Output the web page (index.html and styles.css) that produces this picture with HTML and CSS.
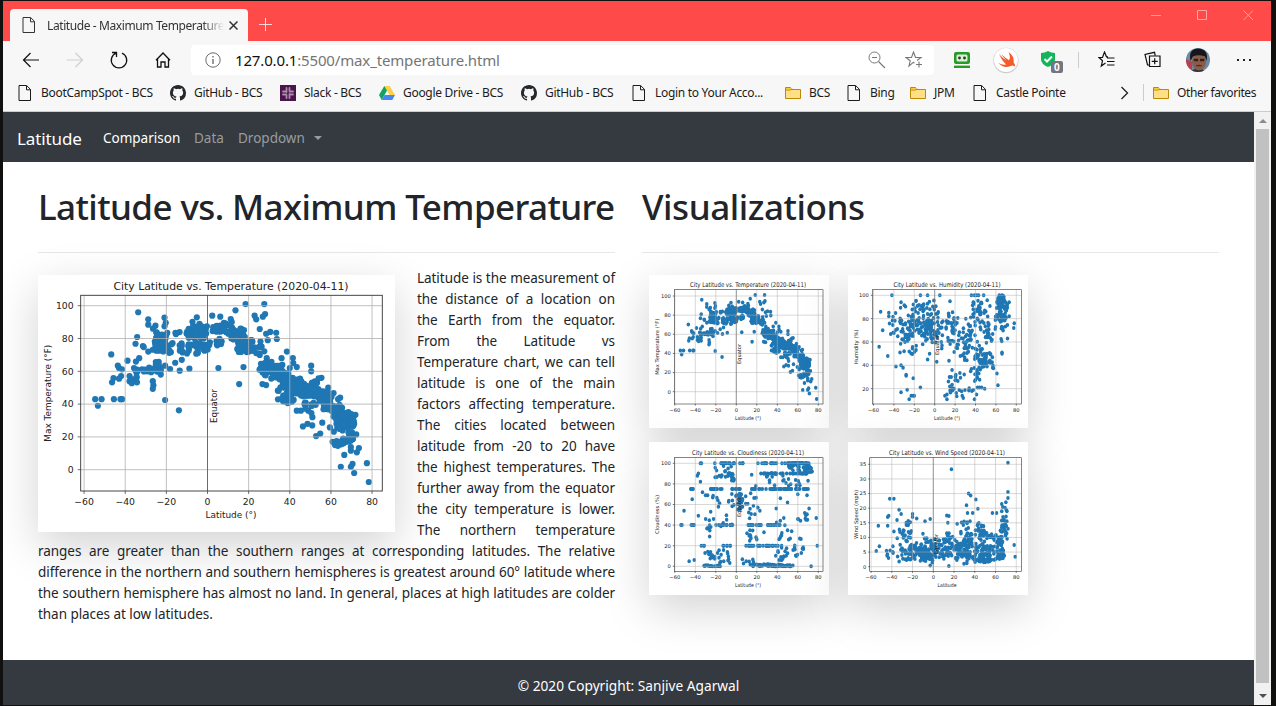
FILE: index.html
```
<!DOCTYPE html>
<html lang="en">
<head>
<meta charset="utf-8">
<title>Latitude - Maximum Temperature</title>
<link rel="stylesheet" href="styles.css">
</head>
<body>
<svg class="defs" width="0" height="0">
  <symbol id="page" viewBox="0 0 16 16"><path d="M2 .5h7.6l3.9 3.9v11.1H2zM9.5.8v4h4" fill="none" stroke="currentColor"/></symbol>
  <symbol id="folder" viewBox="0 0 16 16"><path d="M.5 2.5h5l1 2h9v9H.5z" fill="#ffde85" stroke="#b98a08"/><path d="M1 5h5l1-1.2" fill="none" stroke="#b98a08"/><path d="M1 3h4.4l.6 1H1z" fill="#ffc93c"/></symbol>
  <symbol id="github" viewBox="0 0 16 16"><path fill="#24292e" fill-rule="evenodd" d="M8 0C3.58 0 0 3.58 0 8c0 3.54 2.29 6.53 5.47 7.59.4.07.55-.17.55-.38 0-.19-.01-.82-.01-1.49-2.01.37-2.53-.49-2.69-.94-.09-.23-.48-.94-.82-1.13-.28-.15-.68-.52-.01-.53.63-.01 1.08.58 1.23.82.72 1.21 1.87.87 2.33.66.07-.52.28-.87.51-1.07-1.78-.2-3.64-.89-3.64-3.95 0-.87.31-1.59.82-2.15-.08-.2-.36-1.02.08-2.12 0 0 .67-.21 2.2.82a7.6 7.6 0 0 1 4 0c1.53-1.04 2.2-.82 2.2-.82.44 1.1.16 1.92.08 2.12.51.56.82 1.27.82 2.15 0 3.07-1.87 3.75-3.65 3.95.29.25.54.73.54 1.48 0 1.07-.01 1.93-.01 2.2 0 .21.15.46.55.38A8.01 8.01 0 0 0 16 8c0-4.42-3.58-8-8-8z"/></symbol>
</svg>
<div class="window">
  <header class="tabstrip">
    <div class="tab">
      <svg class="i16" ><use href="#page"/></svg>
      <span class="tab-title">Latitude - Maximum Temperature</span>
      <svg class="tab-close" width="9" height="9" viewBox="0 0 9 9"><path d="M.5.5l8 8M8.5.5l-8 8" stroke="#333" stroke-width="1.5"/></svg>
    </div>
    <svg class="newtab" width="13" height="13" viewBox="0 0 13 13"><path d="M6.5 0v13M0 6.5h13" stroke="#ffd5d5"/></svg>
    <div class="controls">
      <svg width="11" height="11" viewBox="0 0 11 11"><path d="M0 5.5h10" stroke="#ff9b9b"/></svg>
      <svg width="11" height="11" viewBox="0 0 11 11"><path d="M.5.5h9v9h-9z" fill="none" stroke="#ffa6a6"/></svg>
      <svg width="11" height="11" viewBox="0 0 11 11"><path d="M.5.5l9.500 9.500M10 .5L.5 10" stroke="#ff9b9b"/></svg>
    </div>
  </header>

  <div class="toolbar">
    <svg class="nav" viewBox="0 0 20 20"><path d="M18 10H2.500M9.500 3L2.500 10l7 7" fill="none" stroke="#111" stroke-width="1.200"/></svg>
    <svg class="nav" viewBox="0 0 20 20"><path d="M2 10h15.500M10.500 3l7 7-7 7" fill="none" stroke="#cfcfcf" stroke-width="1.200"/></svg>
    <svg class="nav" viewBox="0 0 20 20"><path d="M7 3.100a7.700 7.700 0 1 0 6 0M3 2.500h4.500V7" fill="none" stroke="#111" stroke-width="1.300"/></svg>
    <svg class="nav home" viewBox="0 0 20 20"><path d="M4.500 9v8H8v-5h4v5h3.500V9M3 10.300L10 3l7 7.300" fill="none" stroke="#111" stroke-width="1.300"/></svg>
    <div class="omnibox">
      <svg width="16" height="16" viewBox="0 0 16 16"><circle cx="8" cy="8" r="7.200" fill="none" stroke="#6b6b6b"/><path d="M8 7v5M8 4v1.500" stroke="#555" stroke-width="1.200"/></svg>
      <span class="url"><b>127.0.0.1</b>:5500/max_temperature.html</span>
      <svg class="zoomicon" width="18" height="18" viewBox="0 0 18 18"><circle cx="6.500" cy="6.500" r="5.500" fill="none" stroke="#777"/><path d="M4 6.500h5M10.500 10.500l6.500 6.500" stroke="#777" stroke-width="1.200"/></svg>
      <svg width="18" height="18" viewBox="0 0 18 18"><path d="M9.500 12l-1.200-.6L4 15l1.200-5.300L1 6.500h5.500L8.500 1l2 5.500H16l-4 3M11 13.500h6M14 10.500v6" fill="none" stroke="#777" stroke-width="1.100"/></svg>
    </div>
    <svg class="ext e1" width="16" height="16" viewBox="0 0 16 16"><rect x="0" y="0" width="16" height="12" rx="2" fill="#279b27"/><rect x="2.500" y="2.500" width="11" height="7" rx="1.500" fill="#d9f1d5"/><circle cx="5.500" cy="6" r="1.400" fill="#333"/><circle cx="10.500" cy="6" r="1.400" fill="#333"/><path d="M0 14.800h16" stroke="#279b27" stroke-width="2.400"/></svg>
    <svg class="ext" width="28" height="28" viewBox="0 0 28 28"><circle cx="14" cy="14.500" r="12.700" fill="#ccc"/><circle cx="14" cy="14" r="12" fill="#fff"/><path d="M7 8q4 4.500 7.500 6.500Q11 11 9 8q5 4.500 8 6.300Q19 11 16.500 6q6 4 5.200 10.500 1.700 2 1 4.200-2-2-4-.8Q12 23 6.500 17q4 2.500 7.500 1.500Q9.500 14 7 8z" fill="#f45a2a"/></svg>
    <svg class="ext e3" width="24" height="24" viewBox="0 0 24 24"><path d="M1 3q4 0 7-2 3 2 7 2v7q-1 5-7 7-6-2-7-7z" fill="#14b45b"/><path d="M4.500 9l2.500 2.500 5-5" fill="none" stroke="#fff" stroke-width="2"/><rect x="11" y="11" width="12" height="12" rx="2" fill="#75757f"/><text x="14" y="21" font-family="Noto Sans" font-size="10" font-weight="700" fill="#fff">0</text></svg>
    <i class="sep"></i>
    <svg class="ext" width="18" height="18" viewBox="0 0 18 18"><path d="M10 5.800H8.500L6.500 1l-2 5.500H1l3.500 3.300L3.300 15 7.500 12M9 7h7.500M9 10.500h7.500M9 14h7.500" fill="none" stroke="#111" stroke-width="1.200"/></svg>
    <svg class="ext" width="18" height="18" viewBox="0 0 18 18"><path d="M5 14H3.500L1 3.500 10.500 1.300l.7 3M5.500 5H16v10.500H5.500zM10.700 7.300v6M7.700 10.300h6" fill="none" stroke="#111" stroke-width="1.200"/></svg>
    <svg class="ext" width="24" height="24" viewBox="0 0 24 24"><defs><clipPath id="round"><circle cx="12" cy="12" r="12"/></clipPath></defs><g clip-path="url(#round)"><path d="M0 0h24v24H0z" fill="#6a8aa5"/><path d="M0 11l6 3v10H0z" fill="#b8404c"/><path d="M3 24q9-7 18 0z" fill="#34323a"/><ellipse cx="13" cy="14" rx="7" ry="8.500" fill="#8a5c49"/><path d="M4.500 13Q2 1 12 .500q11 .5 8.500 12.500L19 8.500Q12 6 7 8.500z" fill="#18161a"/><path d="M7.500 10.800h4.700v2.400H8zM14 10.800h4.700l-.7 2.400h-4z" fill="#30211e"/><path d="M10 17.300q3-1.300 6 0v1h-6z" fill="#4a2d25"/></g></svg>
    <svg class="ext" width="16" height="4" viewBox="0 0 16 4"><path d="M1 1h2v2H1zM7 1h2v2H7zM13 1h2v2h-2z" fill="#222"/></svg>
  </div>

  <nav class="bookmarks">
    <span><svg class="i16"><use href="#page"/></svg>BootCampSpot - BCS</span>
    <span><svg class="i16"><use href="#github"/></svg>GitHub - BCS</span>
    <span><svg class="i16" viewBox="0 0 16 16"><path d="M0 0h16v16H0z" fill="#4a154b"/><path d="M6.500 3v4M9.500 3v2.500M6.500 10.500v2.500M9.500 9v4M3 6.500h2.500M9.500 6.500H13M3 9.500h3.500M10.500 9.500H13" stroke="#a98cab" stroke-width="1.800" stroke-linecap="round"/></svg>Slack - BCS</span>
    <span><svg class="i16" viewBox="0 0 16 16"><path d="M5.300 1h5.400L16 10h-5.300z" fill="#ffcf48"/><path d="M5.300 1L8 5.500 2.700 15 0 10z" fill="#11a35f"/><path d="M5.500 10H16l-2.700 5H2.700z" fill="#4688f1"/></svg>Google Drive - BCS</span>
    <span><svg class="i16"><use href="#github"/></svg>GitHub - BCS</span>
    <span><svg class="i16"><use href="#page"/></svg>Login to Your Acco...</span>
    <span><svg class="i16"><use href="#folder"/></svg>BCS</span>
    <span><svg class="i16"><use href="#page"/></svg>Bing</span>
    <span><svg class="i16"><use href="#folder"/></svg>JPM</span>
    <span><svg class="i16"><use href="#page"/></svg>Castle Pointe</span>
    <span><svg width="9" height="14" viewBox="0 0 9 14"><path d="M1.500 1l6 6-6 6" fill="none" stroke="#222" stroke-width="1.300"/></svg></span>
    <span class="other"><svg class="i16"><use href="#folder"/></svg>Other favorites</span>
  </nav>

  <div class="view">
    <div class="doc">
      <nav class="navbar">
        <span class="brand">Latitude</span>
        <span class="link active">Comparison</span>
        <span class="link l2">Data</span>
        <span class="link l3">Dropdown</span>
        <i class="caret"></i>
      </nav>
      <main class="cols">
        <section>
          <h1 class="t1">Latitude vs. Maximum Temperature</h1>
          <hr>
          <svg class="chart main-chart" data-chart="main" viewBox="0 0 357 257"></svg>
          <p class="copy">
            <span>Latitude is the measurement of</span>
            <span>the distance of a location on</span>
            <span>the Earth from the equator.</span>
            <span>From the Latitude vs</span>
            <span>Temperature chart, we can tell</span>
            <span>latitude is one of the main</span>
            <span>factors affecting temperature.</span>
            <span>The cities located between</span>
            <span>latitude from -20 to 20 have</span>
            <span>the highest temperatures. The</span>
            <span>further away from the equator</span>
            <span>the city temperature is lower.</span>
            <span>The northern temperature</span>
            <span>ranges are greater than the southern ranges at corresponding latitudes. The relative</span>
            <span>difference in the northern and southern hemispheres is greatest around 60° latitude where</span>
            <span>the southern hemisphere has almost no land. In general, places at high latitudes are colder</span>
            <span class="last">than places at low latitudes.</span>
          </p>
        </section>
        <section>
          <h1 class="t2">Visualizations</h1>
          <hr>
          <div class="thumbs">
            <svg class="chart" data-chart="temp" viewBox="0 0 180 153"></svg>
            <svg class="chart" data-chart="humidity" viewBox="0 0 180 153"></svg>
            <svg class="chart" data-chart="cloud" viewBox="0 0 180 153"></svg>
            <svg class="chart" data-chart="wind" viewBox="0 0 180 153"></svg>
          </div>
        </section>
      </main>
      <footer class="footer"><span>© 2020 Copyright: Sanjive Agarwal</span></footer>
    </div>
    <div class="scroll">
      <i class="up"></i><div class="thumb"></div><i class="down"></i>
    </div>
  </div>
</div>
<script src="charts.js"></script>
</body>
</html>
```
FILE: styles.css
```
* { box-sizing: border-box; }
body { margin: 0; height: 706px; overflow: hidden; background: #10100f; padding: 1px 5px 1px 3px; font-family: "Noto Sans", "Open Sans", sans-serif; }
.defs { position: absolute; }
svg { display: block; flex: none; }
.i16 { width: 16px; height: 16px; }
.window { height: 704px; width: 1268px; background: #f7f7f7; display: flex; flex-direction: column; }

.tabstrip { height: 40px; background: #ff4a4a; display: flex; align-items: flex-start; padding-left: 7px; flex: none; }
.tab { width: 238px; height: 32px; margin-top: 8px; background: #f7f7f7; border-radius: 4px 4px 0 0; display: flex; align-items: center; padding: 0 10px 0 11px; color: #333; }
.tab-title { width: 177px; margin-left: 10px; margin-right: 5px; font-size: 12px; letter-spacing: -0.4px; white-space: nowrap; -webkit-mask-image: linear-gradient(90deg, #000 88%, transparent); mask-image: linear-gradient(90deg, #000 88%, transparent); }
.newtab { margin: 17px 0 0 11px; }
.controls { margin-left: auto; margin-right: 17px; margin-top: 9px; display: flex; gap: 35px; }

.toolbar { height: 38px; flex: none; display: grid; grid-template-columns: 44px 44px 44px 50px 743px 50px 44px 44px 12px 46px 45px 45px 47px; padding-left: 6px; align-items: center; justify-items: center; }
.nav { width: 20px; height: 20px; }
.home { margin-right: 6px; }
.omnibox { width: 743px; height: 30px; background: #fff; border-radius: 4px; display: flex; align-items: center; padding: 0 11px 0 14px; justify-self: start; }
.url { margin-left: 14px; font-size: 15px; letter-spacing: -0.15px; color: #757575; white-space: nowrap; }
.url b { font-weight: 400; color: #111; }
.zoomicon { margin-left: auto; margin-right: 19px; }
.e1 { margin-left: 6px; }
.e3 { margin: 4px 0 0 4px; }
.sep { width: 1px; height: 16px; background: #ccc; }

.bookmarks { height: 33px; flex: none; border-bottom: 1px solid #cbcbcb; display: grid; grid-template-columns: 153px 110px 99px 142px 110px 154px 61px 64px 62px 148px 24px 110px; padding-left: 14px; padding-bottom: 5px; align-items: center; color: #1b1b1b; font-size: 12px; letter-spacing: -0.3px; white-space: nowrap; }
.bookmarks span { display: flex; align-items: center; gap: 8px; }
.bookmarks .other { border-left: 1px solid #ccc; padding-left: 9px; margin-left: -1px; letter-spacing: -0.4px; }

.view { height: 593px; flex: none; display: flex; }
.doc { width: 1251px; background: #fff; display: flex; flex-direction: column; color: #212529; }
.navbar { height: 50px; flex: none; background: #343a40; display: flex; align-items: center; padding: 2px 0 0 14px; color: #999c9f; font-size: 13.5px; white-space: nowrap; }
.brand { color: #fff; font-size: 17px; width: 86px; letter-spacing: -0.1px; }
.link { width: 91px; }
.active { color: #fff; }
.l2 { width: 44px; }
.l3 { width: 76px; }
.caret { border: 4px solid transparent; border-top-color: #999c9f; border-bottom: 0; }
.cols { height: 498px; flex: none; display: grid; grid-template-columns: 577px 577px; column-gap: 27px; padding: 23px 0 0 35px; }
h1 { margin: 0; height: 43px; line-height: 43px; font-size: 35px; font-weight: 500; white-space: nowrap; }
.t1 { letter-spacing: -0.6px; }
.t2 { letter-spacing: -0.45px; }
hr { margin: 24px 0 0; border: 0; border-top: 1px solid #e7e7e7; height: 1px; }
.chart { background: #fff; box-shadow: 0 14px 43px rgba(0, 0, 0, .175); }
.main-chart { float: left; width: 357px; height: 257px; margin: 22px 22px 0 0; }
.copy { margin: 15px 0 0; font-size: 13.5px; letter-spacing: -0.05px; line-height: 21px; }
.copy span { display: block; white-space: nowrap; text-align: justify; text-align-last: justify; }
.copy .last { text-align-last: left; }
.thumbs { display: grid; grid-template-columns: 180px 180px; gap: 14px 19px; padding: 22px 0 0 7px; }
.thumbs .chart { width: 180px; height: 153px; }
.footer { height: 45px; background: #343a40; color: #fff; text-align: center; font-size: 13.7px; line-height: 52px; overflow: hidden; }

.scroll { width: 17px; background: #f1f1f1; display: flex; flex-direction: column; align-items: center; height: 593px; }
.scroll i { border: 4px solid transparent; }
.scroll .up { border-bottom-color: #8a8a8a; border-top: 0; margin: 7px 0 6px; }
.scroll .thumb { width: 13px; height: 554px; background: #c1c1c1; }
.scroll .down { border-top-color: #505050; border-bottom: 0; margin-top: 11px; }
```
FILE: charts.js
```
const NS = 'http://www.w3.org/2000/svg';

function randomizer(seed) {
  return () => {
    seed = (seed * 1664525 + 1013904223) >>> 0;
    return seed / 4294967296;
  };
}

// Cities are listed singly, then as groups: [lat from, lat to, value from, value to, count].
// spread widens each group's latitudes and share scales its count.
function build(seed, singles, groups, spread, share, lift, top) {
  const r = randomizer(seed);
  const pts = [];
  for (let i = 0; i < singles.length; i += 2) pts.push([singles[i], singles[i + 1]]);
  for (const [a, b, c, d, n] of groups)
    for (let i = 0; i < n * share; i++) {
      const lat = a + (b - a) * r() + (r() - .5) * spread;
      const v = c + (d - c) * r() + (d - c > 2 ? (r() - .5) * lift : 0);
      pts.push([Math.min(lat, 74), Math.min(v, top)]);
    }
  return pts;
}

const temp = build(7, [
  -54.6,43,-51.5,43,-53.3,39,-45.5,43,-42.3,43,-41.5,43,-46.8,70.3,-33.7,96,-28.8,91.7,-28.8,88.4,-25.3,87.8,-26.5,86,
  -34.2,80.9,-35,76.8,-31.4,75.4,-31,74.8,-28.8,72,-38.9,66.5,-43.6,63.4,-43,62,-41.6,61.2,-42,57.1,-43,55.5,-45.7,55.9,-46.4,53.3,
  -37.9,57.1,-37.9,54,-33.2,68,-34.8,65.9,-26.6,54,-26.3,51.5,-26.6,49.3,-20.9,92.7,-20.3,89.6,-20.9,87.4,-20.6,42.5,
  -13.9,36.2,-13.5,60.4,-8.8,61.6,-12.5,67,-18.2,61.4,-20.6,63.4,-15.7,65.2,-5.2,92.9,2.3,93.9,6.2,93.3,13.6,97.2,18.5,101,27.6,101,
  22.9,93.9,23.7,91.7,28,94.9,26.9,93.3,25.4,85.8,11.3,91.9,11.8,90,8,89.6,-7.3,90.2,-3.9,89,17.5,62.6,5.3,62,15.4,52.2,
  30.5,84,28.5,82.9,33.4,83.5,33.7,79.7,29.3,79,38.6,72,41.5,68.1,41.7,65,36,68,28.8,68,50.4,63.4,50.4,60,43.4,62.6,40,62,
  55.4,56,54,55.7,58.7,50,61.3,46.7,64.5,43.9,63.5,43,26.7,52.2,28.5,51.6,25.3,61,46.4,26.4,48.6,28,50.9,27,43.4,36,45.4,36,
  52.8,20.5,54.8,22,55.8,28.7,59.5,25.8,61.4,23.2,60.8,17,64.8,1.8,69.7,1.8,70.5,3.5,71.3,-2,77.5,4,78.4,-7.5,66.5,9,72.6,10.6,
  73.6,13.2,72.3,21.5,69.7,11.6,69.7,13.8,62,15,49,36,50.5,34.5,51,32
], [
  [-26,-19,71,84,40],[-20,-8,71,77,22],[-18,-8,82,85,9],[-9,0,79,88,42],[-9,1,71,78,20],[2,8,84,88,14],[4,7,76,80,8],
  [8,13,83,89,15],[11,18,79,86,34],[14,23,72,80,55],[24,28,70,78,9],[-36,-27,59,62.5,14],[-37,-32,53,57,7],[-27,-22,57,66,11],
  [26,31,58,66,19],[31,36,55,64,25],[34,42,41,49,27],[36,40,50,60,22],[40,45,46,56,30],[45,50,44,54,22],[49,54,44,55,24],
  [46,52,37,42,9],[54,60,40,48,22],[55,61,34,41,11],[61,66,32,40,23],[62,67,24,31,20],[66,72,26,35,36],[66,71,17,24,12],[62,67,14,19,10]
], 1.6, 1, 1.5, 101);

const humidity = build(21, [
  -53,86,-51,70,-54.5,56,-46,48,-42,100,-14,100,-7,100,5,100,36,100,39,100,41,100,43,100,48,100,-38,39,-33,40,-31,38,-28,32,-28,31,
  -21,29,-14,21,-27,19,-33,17,-25,11,-23,14,-21,14,-20,14,-7,45,-5,50,2,43,62,23,49,20,61,33,78,76,77.500,72,66,50,66,51,-34,51,-30,52,
  12,11,12,15,10,14,39,11,41,15,46,21,44,21,42,21,19,20,14,44,17,36,15,95,-45,85,-45,82,-33,94,73,94,73,82,28,12,27,14
], [
  [-44,-34,62,88,16],[-34,-22,60,92,40],[-24,-13,67,78,32],[-12,-2,71,78,42],[-22,0,80,95,38],[-14,4,60,70,22],[-25,-20,50,58,9],[0,8,55,90,26],
  [10,22,68,84,32],[10,24,54,68,14],[14,30,16,34,26],[25,40,56,70,26],[34,52,84,94,34],[30,50,72,84,20],[42,56,38,49,46],
  [34,45,26,38,16],[46,60,58,76,28],[62,70,78,97,75],[63,68,95,100,18],[64,71,60,76,10],[26,50,42,58,28],[35,40,13,22,4]
], 5, .87, 6, 100);

const cloud = build(44, [
  -51,54,-54,40,-53,40,-43,65,-37,49,-46,5,-41,6,-35,82,-35,100,-34,100,-21,100,-38,88,-37,90,-33,72,-30,69,-28,69,78,47,79,20,71,56,73,0,
  60,46,50,62,43,66,39,56,60,70,69,69,70,83,74,92,73,95,14,71,19,78,23,54,21,57,15,89,-8,95,-5,97,-25,53,-28,37,-26,29,27,33,50,35,54,34
], [
  [-45,-40,75,75,4],[-25,-8,75,75,14],[-8,4,75,75,8],[14,28,75,75,10],[31,55,75,75,28],[57,69,75,75,12],[50,71,100,100,40],
  [-15,8,100,100,18],[12,47,100,100,15],[25,47,90,90,17],[49,69,90,90,17],[60,72,90,98,26],[47,60,94,98,10],[-37,-14,0,1,19],
  [15,43,0,2,40],[32,55,0,1,45],[10,45,20,20,28],[-34,-4,20,20,10],[11,25,40,40,16],[30,41,40,40,10],[-19,-3,40,40,11],[-47,-36,40,40,4],
  [-8,-2,82,90,15],[-25,-2,86,99,14],[-24,5,56,73,20],[2,7,56,70,18],[8,20,46,70,12],[-33,-4,4,17,27],[-30,-5,30,49,15],
  [5,18,2,9,9],[10,25,24,36,11],[38,52,6,18,15],[37,52,25,47,12],[52,67,5,29,15],[62,70,44,53,8],[30,49,78,94,12],[48,62,78,88,9]
], 3, .9, 3, 100);

const wind = build(98, [
  17.5,33.3,72,35.5,72,25.5,72,23.5,34,25,36,24.3,41,23,-42,23.200,-38,23.200,-33,19.500,-31,18,-53,14,-44,14,-44,17,-43,17.400,-35,16,
  -20,18,-20,17,-16,16.500,-3,16.300,-8,15.500,-10,11.300,13,17.500,15,17.300,33,18.400,38,18.400,43,19.800,32,21,57,18.400,61,18.400,
  66,21.400,66,19,67,20.400,70,22,71,19,-55,5.400,-52,7,-38,12,-39,7,78,7.400,79,3.400,15,.2,-3,.4,14,15,23,14.700
], [
  [-46,-38,3,6,8],[-34,-20,8,12.500,24],[-27,-21,13,16,8],[-34,-22,2,6,22],[-24,-11,2,8,42],[-14,1,2,7,72],
  [-11,7,6,10,22],[5,18,3,9,42],[10,18,8,12,14],[19,33,4,9,42],[28,40,7,12,32],[29,37,13,16,9],[39,54,9,13,30],
  [30,48,2,8,55],[46,57,2,7,48],[43,50,13,15,9],[56,67,6,11,28],[60,69,2,6,28],[65,71,8,16,28],[65,71,16,20,6],[20,52,1,4,25]
], 4, .86, 1.4, 40);

const charts = {
  main: { pts: temp, title: 'Temperature', y: 'Max Temperature (°F)', box: [42.7, 20.3, 344.3, 216], x0: 169.5, kx: 2.057, y0: 194.7, ky: 1.64, ticks: [0,20,40,60,80,100], r: [3.1, 3.1], fs: 9.3, tf: 11, tw: 235, tx: 193, ty: 15, lw: 51, lx: 193, ly: 243, yx: 13, yw: 97, tickY: 230, eqY: 148, eqW: 34 },
  temp: { pts: temp, title: 'Temperature', y: 'Max Temperature (°F)', box: [25.3,14.7,174,129], x0: 87.3, kx: 1.025, y0: 116.7, ky: .957, ticks: [0,20,40,60,80,100], yw: 56, eqY: 89 },
  humidity: { pts: humidity, title: 'Humidity', y: 'Humidity (%)', box: [24.3,14.7,173.3,129], x0: 86.7, kx: 1.02, y0: 137, ky: 1.167, ticks: [20,40,60,80,100], tw: 107, yw: 35, eqY: 80 },
  cloud: { pts: cloud, title: 'Cloudiness', y: 'Cloudiness (%)', box: [25.3,15.7,174,129.3], x0: 87.3, kx: 1.025, y0: 124.3, ky: 1.03, ticks: [0,20,40,60,80,100], tw: 112, ty: 12.5, yw: 39, eqY: 75 },
  wind: { pts: wind, title: 'Wind Speed', y: 'Wind Speed (mph)', box: [21.7,15.7,173.7,129.3], x0: 85.3, kx: 1.037, y0: 124.7, ky: 2.925, ticks: [0,5,10,15,20,25,30,35], ty: 12.5, yw: 49, eqY: 112, xlabel: 'Latitude', lw: 19 }
};
const small = { r: [1.75, 2], fs: 5.2, tf: 6.5, tw: 116, tx: 99, ty: 12.3, lw: 26, lx: 99, ly: 144.5, yx: 10, tickY: 137, eqW: 20 };

function add(svg, tag, attrs, text) {
  const el = document.createElementNS(NS, tag);
  for (const k in attrs) el.setAttribute(k, attrs[k]);
  if (text !== undefined) el.textContent = text;
  svg.appendChild(el);
}

for (const svg of document.querySelectorAll('[data-chart]')) {
  const name = svg.dataset.chart;
  const c = name === 'main' ? charts.main : { ...small, ...charts[name] };
  const big = name === 'main';
  const [l, t, r, b] = c.box;
  const X = v => c.x0 + v * c.kx;
  const Y = v => c.y0 - v * c.ky;
  const font = { 'font-family': 'DejaVu Sans, sans-serif', fill: '#222', 'font-size': c.fs };
  const fit = w => ({ textLength: w, lengthAdjust: 'spacingAndGlyphs' });
  for (const [a, v] of c.pts) add(svg, 'ellipse', { cx: X(a), cy: Y(v), rx: c.r[0], ry: c.r[1], fill: '#1f77b4' });
  const grid = { stroke: '#b0b0b0', 'stroke-width': big ? .8 : .5 };
  for (let v = -60; v <= 80; v += 20) {
    add(svg, 'line', { x1: X(v), x2: X(v), y1: t, y2: b, ...grid });
    add(svg, 'line', { x1: X(v), x2: X(v), y1: b, y2: b + (big ? 3 : 1.5), stroke: '#333', 'stroke-width': .7 });
    add(svg, 'text', { ...font, x: X(v), y: c.tickY, 'text-anchor': 'middle' }, String(v).replace('-', '−'));
  }
  for (const v of c.ticks) {
    add(svg, 'line', { x1: l, x2: r, y1: Y(v), y2: Y(v), ...grid });
    add(svg, 'line', { x1: l - (big ? 3 : 1.5), x2: l, y1: Y(v), y2: Y(v), stroke: '#333', 'stroke-width': .7 });
    add(svg, 'text', { ...font, x: l - (big ? 7 : 3.5), y: Y(v) + c.fs * .36, 'text-anchor': 'end' }, v);
  }
  add(svg, 'line', { x1: X(0), x2: X(0), y1: t, y2: b, stroke: '#555', 'stroke-width': big ? .8 : .5 });
  add(svg, 'rect', { x: l, y: t, width: r - l, height: b - t, fill: 'none', stroke: '#333', 'stroke-width': big ? .9 : .6 });
  add(svg, 'text', { ...font, 'font-size': c.tf, x: c.tx, y: c.ty, 'text-anchor': 'middle', ...fit(c.tw) }, `City Latitude vs. ${c.title} (2020-04-11)`);
  add(svg, 'text', { ...font, x: c.lx, y: c.ly, 'text-anchor': 'middle', ...fit(c.lw) }, c.xlabel || 'Latitude (°)');
  add(svg, 'text', { ...font, transform: `translate(${c.yx} ${(t + b) / 2}) rotate(-90)`, 'text-anchor': 'middle', ...fit(c.yw) }, c.y);
  add(svg, 'text', { ...font, transform: `translate(${X(0) + (big ? 9 : 4.5)} ${c.eqY}) rotate(-90)`, ...fit(c.eqW) }, 'Equator');
}
```
